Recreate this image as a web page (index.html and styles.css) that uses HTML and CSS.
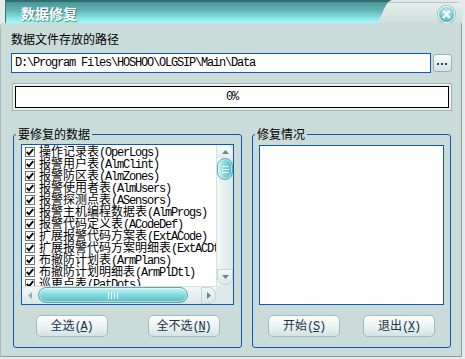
FILE: index.html
```html
<!DOCTYPE html>
<html lang="zh-CN">
<head>
    <meta charset="UTF-8">
    <title>数据修复</title>
    <link rel="stylesheet" href="styles.css">
</head>
<body>
    <div class="dialog">
        <div class="titlebar">
            <div class="caption">数据修复</div>
            <div class="close">
                <svg width="9" height="9" viewBox="0 0 9 9"><path d="M1.5 1.5 L7.5 7.5 M7.5 1.5 L1.5 7.5" stroke="#fff" stroke-width="2" stroke-linecap="round"/></svg>
            </div>
        </div>

        <div class="panel">
            <div class="label">数据文件存放的路径</div>
            <div class="path-row">
                <div class="path en">D:\Program Files\HOSHOO\OLGSIP\Main\Data</div>
                <button class="browse">
                    <svg width="11" height="3" viewBox="0 0 11 3"><rect x="0" y="0" width="2" height="2" fill="#1b3f8a"/><rect x="4" y="0" width="2" height="2" fill="#1b3f8a"/><rect x="8" y="0" width="2" height="2" fill="#1b3f8a"/></svg>
                </button>
            </div>

            <div class="progress">
                <div class="bar"><span class="en">0%</span></div>
            </div>

            <div class="groups">
                <fieldset class="group group-data">
                    <legend>要修复的数据</legend>
                    <div class="listbox">
                        <div class="list-main">
                            <div class="items" id="items"></div>
                            <div class="vscroll">
                                <div class="sb-btn sb-up">
                                    <svg width="7" height="4" viewBox="0 0 7 4"><polygon points="0,4 3.5,0 7,4" fill="#5a8c92"/></svg>
                                </div>
                                <div class="vthumb"><span></span><span></span><span></span></div>
                                <div class="vtrack"></div>
                                <div class="sb-btn sb-down">
                                    <svg width="7" height="4" viewBox="0 0 7 4"><polygon points="0,0 3.5,4 7,0" fill="#5a8c92"/></svg>
                                </div>
                            </div>
                        </div>
                        <div class="hscroll">
                            <div class="hbar">
                                <div class="sb-btn sb-left">
                                    <svg width="4" height="7" viewBox="0 0 4 7"><polygon points="4,0 0,3.5 4,7" fill="#8fb0b4"/></svg>
                                </div>
                                <div class="hthumb"><span></span><span></span><span></span><span></span></div>
                                <div class="htrack"></div>
                                <div class="sb-btn sb-right">
                                    <svg width="4" height="7" viewBox="0 0 4 7"><polygon points="0,0 4,3.5 0,7" fill="#5a8c92"/></svg>
                                </div>
                            </div>
                            <div class="corner"></div>
                        </div>
                    </div>
                    <div class="btn-row">
                        <button class="btn">全选<span class="en">(<u>A</u>)</span></button>
                        <button class="btn">全不选<span class="en">(<u>N</u>)</span></button>
                    </div>
                </fieldset>

                <fieldset class="group group-result">
                    <legend>修复情况</legend>
                    <div class="listbox"></div>
                    <div class="btn-row">
                        <button class="btn">开始<span class="en">(<u>S</u>)</span></button>
                        <button class="btn">退出<span class="en">(<u>X</u>)</span></button>
                    </div>
                </fieldset>
            </div>
        </div>
    </div>

    <script>
        // tables that can be repaired
        const tables = [
            ['操作记录表', 'OperLogs'],
            ['报警用户表', 'AlmClint'],
            ['报警防区表', 'AlmZones'],
            ['报警使用者表', 'AlmUsers'],
            ['报警探测点表', 'ASensors'],
            ['报警主机编程数据表', 'AlmProgs'],
            ['报警代码定义表', 'ACodeDef'],
            ['扩展报警代码方案表', 'ExtACode'],
            ['扩展报警代码方案明细表', 'ExtACDtl'],
            ['布撤防计划表', 'ArmPlans'],
            ['布撤防计划明细表', 'ArmPlDtl'],
            ['巡更点表', 'PatDots']
        ];

        const list = document.getElementById('items');
        tables.forEach(([name, code]) => {
            const row = document.createElement('div');
            row.className = 'item';
            row.innerHTML =
                '<span class="check"><svg width="8" height="8" viewBox="0 0 8 8"><path d="M0.8 4 L3 6.4 L7.2 1.2" fill="none" stroke="#000" stroke-width="1.9"/></svg></span>' +
                '<span>' + name + '<span class="en">(' + code + ')</span></span>';
            list.appendChild(row);
        });
    </script>
</body>
</html>
```

FILE: styles.css
```css
* {
    margin: 0;
    padding: 0;
    box-sizing: border-box;
}

body {
    background: #e4eaea;
    font-family: "Noto Sans CJK SC", sans-serif;
    font-size: 12px;
    color: #000;
}

.en {
    font-family: "Liberation Mono", "Noto Sans CJK SC", monospace;
    font-size: 12px;
    letter-spacing: -1.2px;
}

.dialog {
    width: 462px;
    height: 357px;
    display: flex;
    flex-direction: column;
}

/* title bar */
.titlebar {
    display: flex;
    height: 23px;
    margin-left: 5px;
    border-top-right-radius: 10px;
    background: linear-gradient(to bottom, transparent 2px, #b2c4c2 2px, #b2c4c2 3px, #e6eeed 3px, #cddfdc);
}

.caption {
    width: 388px;
    height: 23px;
    padding: 3px 0 0 15px;
    line-height: 17px;
    font-size: 14px;
    font-weight: bold;
    color: #fff;
    text-shadow: 1px 1px 1px rgba(20, 70, 72, 0.6);
    border-top: 2px solid #2f6d6f;
    border-left: 1px solid #3b7677;
    background: linear-gradient(#4a9496, #62b4b6 40%, #86e0e2 75%, #a4fafa);
    clip-path: path('M0 0 H388 C378 0 378 23 368 23 H0 Z');
}

.close {
    width: 17px;
    height: 17px;
    margin: 6px 0 0 45px;
    border-radius: 50%;
    border: 1px solid #f4fafa;
    box-shadow: 0 0 0 1px #a6bcbc;
    background: radial-gradient(circle at 50% 30%, #c6f4f6, #6ccad0 55%, #3e9aa2);
    display: flex;
    justify-content: center;
    align-items: center;
}

/* dialog body */
.panel {
    flex: 1;
    background: #c9dcd9;
    border-left: 1px solid #a9bdbb;
    border-right: 1px solid #8a9e9c;
    border-bottom: 1px solid #8a9e9c;
    border-top-left-radius: 4px;
    padding: 9px 0 0 10px;
}

.label {
    line-height: 14px;
}

.path-row {
    display: flex;
    gap: 2px;
    margin-top: 7px;
}

.path {
    width: 420px;
    height: 20px;
    border: 1px solid #1656b0;
    background: #fff;
    padding-left: 3px;
    line-height: 18px;
    white-space: nowrap;
}

.browse {
    width: 19px;
    height: 18px;
    margin-top: 1px;
    border: 1px solid #9fb2b2;
    border-radius: 3px;
    background: linear-gradient(#fbfdfd, #e6efef 50%, #d2e2e2);
    display: flex;
    justify-content: center;
    align-items: center;
    padding-top: 2px;
}

.progress {
    width: 440px;
    height: 28px;
    margin: 10px 0 0 1px;
    border: 1px solid #a4b4b0;
    padding: 2px;
    background: #eef2ee;
}

.bar {
    height: 100%;
    border: 1px solid #000;
    background: #fff;
    display: flex;
    justify-content: center;
    align-items: center;
}

/* group boxes */
.groups {
    display: flex;
    gap: 10px;
    margin: 17px 0 0 2px;
}

.group {
    height: 220px;
    border: 1px solid #0c58b4;
    border-radius: 3px;
    min-width: 0;
}

.group legend {
    margin-left: 2px;
    padding: 0 2px;
    line-height: 12px;
}

.group-data {
    width: 229px;
}

.group-result {
    width: 199px;
}

.listbox {
    border: 1px solid #0c58b4;
    background: #fff;
}

.group-data .listbox {
    width: 213px;
    height: 161px;
    margin: 4px 0 0 7px;
    display: flex;
    flex-direction: column;
}

.group-result .listbox {
    width: 185px;
    height: 160px;
    margin: 5px 0 0 6px;
}

.list-main {
    display: flex;
    height: 141px;
}

.items {
    flex: 1;
    overflow: hidden;
    padding: 1px 0 0 3px;
}

.item {
    display: flex;
    align-items: center;
    height: 12px;
    line-height: 12px;
    white-space: nowrap;
}

.check {
    flex: none;
    width: 10px;
    height: 10px;
    margin-right: 4px;
    border: 1px solid #6f7b7b;
    background: #fff;
    display: flex;
    justify-content: center;
    align-items: center;
}

/* scroll bars */
.vscroll {
    width: 17px;
    display: flex;
    flex-direction: column;
    background: linear-gradient(to right, #f2f7f7, #dbe7e7);
    border-left: 1px solid #d6e2e2;
}

.sb-btn {
    display: flex;
    justify-content: center;
    align-items: center;
}

.sb-up {
    height: 12px;
    margin-top: 1px;
    border-radius: 7px 7px 0 0;
    background: linear-gradient(#fafdfd, #e2ecec);
}

.sb-down {
    height: 16px;
    margin-bottom: 1px;
    border: 1px solid #c6d4d4;
    border-radius: 0 0 7px 7px;
    background: linear-gradient(#f4f8f8, #dde8e8);
}

.vthumb {
    height: 22px;
    border: 1px solid #6aa4a8;
    border-radius: 9px;
    background: linear-gradient(to right, #c8f6f6, #7ed8dc 50%, #58b8c0);
    box-shadow: inset 0 0 0 1px rgba(255, 255, 255, 0.5);
    display: flex;
    flex-direction: column;
    justify-content: center;
    align-items: center;
    gap: 2px;
}

.vthumb span {
    width: 7px;
    height: 1px;
    background: #f4ffff;
}

.vtrack {
    flex: 1;
}

.hscroll {
    display: flex;
    height: 18px;
}

.hbar {
    width: 194px;
    display: flex;
    background: linear-gradient(#f2f7f7, #dbe7e7);
    border-top: 1px solid #d6e2e2;
}

.sb-left,
.sb-right {
    width: 15px;
}

.sb-left {
    border-radius: 7px 0 0 7px;
}

.hthumb {
    width: 150px;
    margin: 0 0 1px 1px;
    border: 1px solid #6aa4a8;
    border-radius: 9px;
    background: linear-gradient(#c8f6f6, #86dde0 45%, #5cbcc4);
    box-shadow: inset 0 0 0 1px rgba(255, 255, 255, 0.45);
    display: flex;
    justify-content: center;
    align-items: center;
    gap: 2px;
}

.hthumb span {
    width: 1px;
    height: 7px;
    background: #f4ffff;
}

.htrack {
    flex: 1;
}

.sb-right {
    border: 1px solid #c6d4d4;
    border-radius: 0 7px 7px 0;
}

.corner {
    flex: 1;
    background: #dfe8e8;
}

/* buttons */
.btn-row {
    display: flex;
    justify-content: center;
    margin-top: 10px;
}

.group-data .btn-row {
    gap: 40px;
}

.group-result .btn-row {
    gap: 23px;
}

.btn {
    width: 72px;
    height: 22px;
    border: 1px solid #a6b8b8;
    border-radius: 5px;
    background: linear-gradient(#fbfdfd, #eef5f5 45%, #d3e3e3);
    font-family: "Noto Sans CJK SC", sans-serif;
    font-size: 12px;
    color: #22324a;
    line-height: 18px;
}
```
